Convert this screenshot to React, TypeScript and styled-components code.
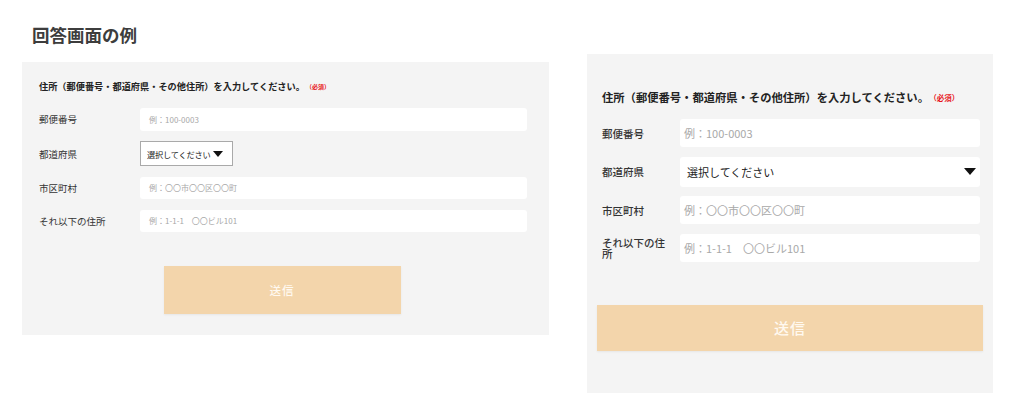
import React from "react";
import styled, { createGlobalStyle, css } from "styled-components";

type Size = "sm" | "lg";

const GlobalStyle = createGlobalStyle`
  html, body {
    margin: 0;
    padding: 0;
    background: #ffffff;
    overflow: hidden;
  }
  body {
    font-family: "Noto Sans CJK JP", "Noto Sans", sans-serif;
    color: #333333;
  }
`;

const Page = styled.div`
  display: flex;
  align-items: flex-start;
  padding: 23px 0 0 22px;
  width: 1024px;
  height: 393px;
  box-sizing: border-box;
`;

const LeftColumn = styled.div`
  display: flex;
  flex-direction: column;
  width: 527px;
`;

const Heading = styled.h1`
  margin: 0 0 15px 0;
  padding-left: 10px;
  font-size: 17.5px;
  line-height: 24px;
  font-weight: 700;
  color: #3d3d3d;
  letter-spacing: 0;
`;

const Panel = styled.section<{ $size: Size }>`
  display: flex;
  flex-direction: column;
  background: #f4f4f4;
  box-sizing: border-box;
  ${({ $size }) =>
    $size === "sm"
      ? css`
          width: 527px;
          padding: 18px 22px 21px 17px;
        `
      : css`
          width: 406px;
          height: 339px;
          margin: 31px 0 0 38px;
          padding: 35px 10px 0 10px;
        `}
`;

const Question = styled.p<{ $size: Size }>`
  margin: 0;
  font-weight: 700;
  color: #222222;
  white-space: nowrap;
  ${({ $size }) =>
    $size === "sm"
      ? css`
          font-size: 9.2px;
          line-height: 13px;
          margin-bottom: 15px;
        `
      : css`
          font-size: 11.3px;
          line-height: 16px;
          margin: 0 3px 13px 5px;
        `}
`;

const Required = styled.span<{ $size: Size }>`
  color: #e8141b;
  font-weight: 700;
  margin-left: 4px;
  font-size: ${({ $size }) => ($size === "sm" ? "6px" : "7.5px")};
  vertical-align: 1px;
`;

const Fields = styled.div<{ $size: Size }>`
  display: grid;
  align-items: center;
  ${({ $size }) =>
    $size === "sm"
      ? css`
          grid-template-columns: 101px 1fr;
          row-gap: 10.5px;
        `
      : css`
          grid-template-columns: 78px 1fr;
          row-gap: 9.5px;
          margin: 0 3px 0 5px;
        `}
`;

const Label = styled.label<{ $size: Size }>`
  color: #333333;
  ${({ $size }) =>
    $size === "sm"
      ? css`
          font-size: 9.5px;
          line-height: 12px;
        `
      : css`
          font-size: 10.5px;
          line-height: 11px;
          font-weight: 500;
          padding-right: 12px;
        `}
`;

const TextInput = styled.div<{ $size: Size }>`
  display: flex;
  align-items: center;
  background: #ffffff;
  border-radius: 3px;
  color: #a8a8a8;
  white-space: pre;
  box-sizing: border-box;
  ${({ $size }) =>
    $size === "sm"
      ? css`
          height: 22.5px;
          padding-left: 9px;
          font-size: 8px;
        `
      : css`
          height: 28px;
          padding-left: 4px;
          font-size: 11px;
        `}
`;

const Select = styled.div<{ $size: Size }>`
  display: flex;
  align-items: center;
  background: #ffffff;
  color: #222222;
  box-sizing: border-box;
  white-space: nowrap;
  ${({ $size }) =>
    $size === "sm"
      ? css`
          justify-self: start;
          width: 93px;
          height: 25px;
          padding: 0 5px 0 6px;
          border: 1px solid #a9a9a9;
          font-size: 8.2px;
          letter-spacing: -0.2px;
          gap: 3px;
        `
      : css`
          height: 30px;
          padding: 0 4px 0 7px;
          border-radius: 3px;
          font-size: 11px;
          justify-content: space-between;
        `}
`;

const Arrow = styled.span<{ $size: Size }>`
  display: inline-block;
  flex: none;
  width: 0;
  height: 0;
  border-style: solid;
  border-color: #111111 transparent transparent transparent;
  ${({ $size }) =>
    $size === "sm"
      ? css`
          border-width: 6px 5px 0 5px;
          margin-top: 1px;
        `
      : css`
          border-width: 7px 6px 0 6px;
        `}
`;

const SubmitButton = styled.button<{ $size: Size }>`
  border: none;
  background: #f3d5ab;
  color: #fff9f0;
  font-family: inherit;
  font-weight: 500;
  box-shadow: 0 1px 2px rgba(0, 0, 0, 0.06);
  cursor: pointer;
  ${({ $size }) =>
    $size === "sm"
      ? css`
          align-self: center;
          margin: 34px 0 0 -2px;
          width: 237px;
          height: 48px;
          font-size: 11.5px;
          letter-spacing: 1px;
        `
      : css`
          margin-top: 43px;
          width: 386px;
          height: 46px;
          font-size: 15px;
          letter-spacing: 1px;
        `}
`;

const fields = [
  { label: "郵便番号", placeholder: "例：100-0003" },
  { label: "都道府県", select: true },
  { label: "市区町村", placeholder: "例：〇〇市〇〇区〇〇町" },
  { label: "それ以下の住所", placeholder: "例：1-1-1　〇〇ビル101" },
];

function AddressForm({ size }: { size: Size }) {
  return (
    <Panel $size={size}>
      <Question $size={size}>
        住所（郵便番号・都道府県・その他住所）を入力してください。
        <Required $size={size}>（必須）</Required>
      </Question>
      <Fields $size={size}>
        {fields.map((f) => (
          <React.Fragment key={f.label}>
            <Label $size={size}>{f.label}</Label>
            {f.select ? (
              <Select $size={size}>
                <span>選択してください</span>
                <Arrow $size={size} />
              </Select>
            ) : (
              <TextInput $size={size}>{f.placeholder}</TextInput>
            )}
          </React.Fragment>
        ))}
      </Fields>
      <SubmitButton $size={size}>送信</SubmitButton>
    </Panel>
  );
}

export default function App() {
  return (
    <>
      <GlobalStyle />
      <Page>
        <LeftColumn>
          <Heading>回答画面の例</Heading>
          <AddressForm size="sm" />
        </LeftColumn>
        <AddressForm size="lg" />
      </Page>
    </>
  );
}
